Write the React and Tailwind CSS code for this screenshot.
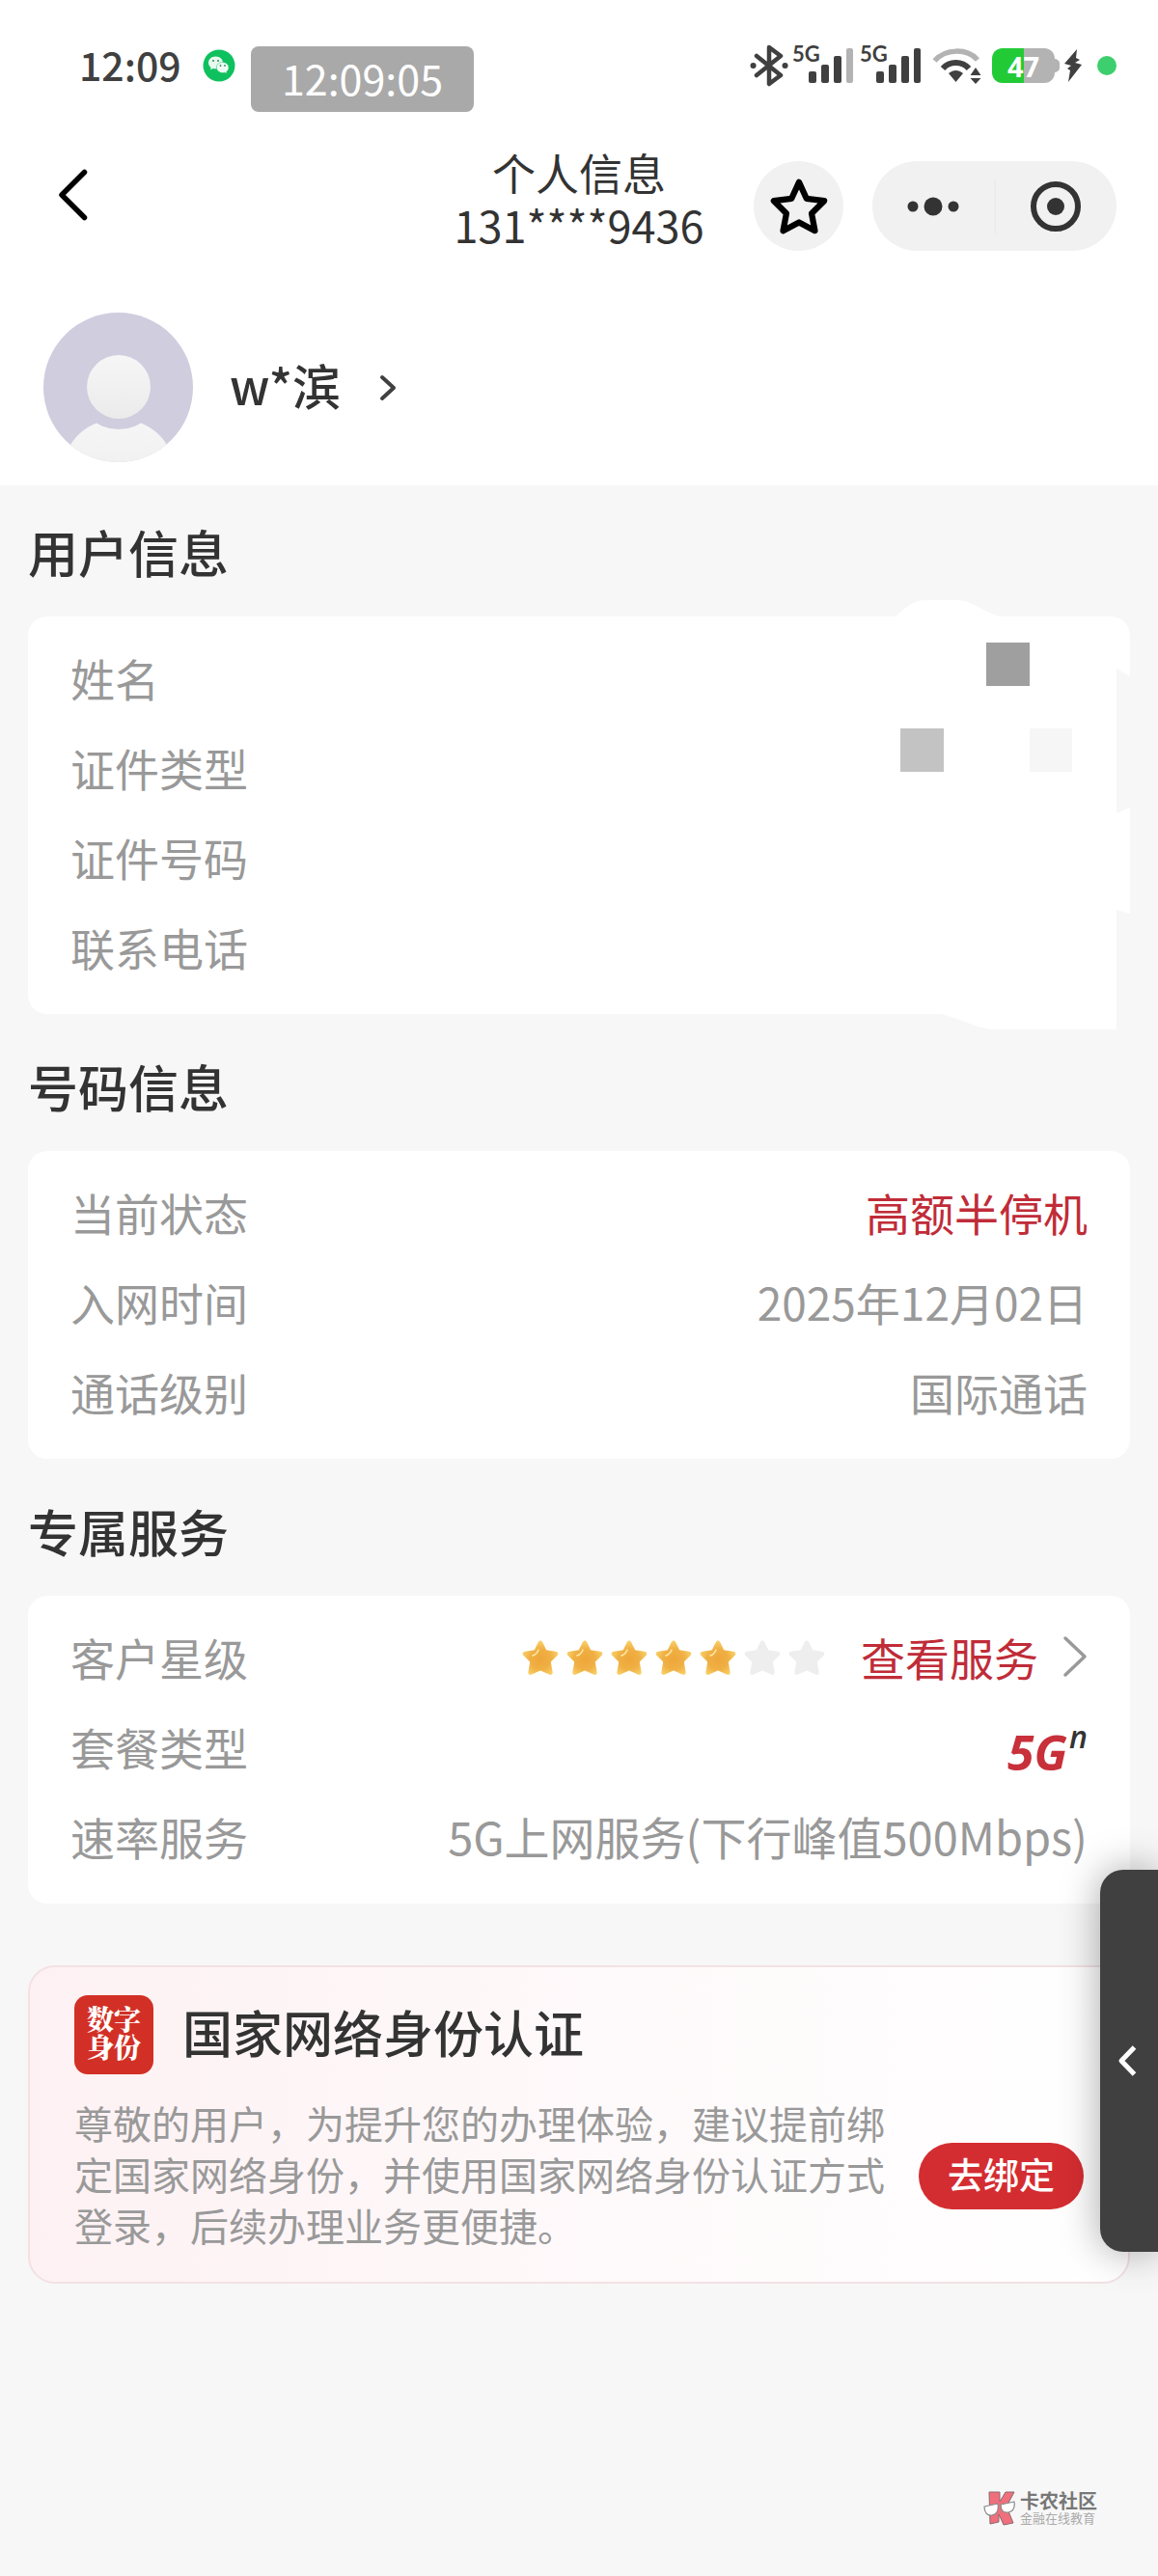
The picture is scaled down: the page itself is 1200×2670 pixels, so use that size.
import React from "react";

const STAR =
  "M20 1.5c1 0 1.7.6 2.2 1.6l4 8.2 9.6 1.4c2.6.4 3.4 2.6 1.6 4.4l-6.6 6.5 1.8 10.4c.4 2.4-1.4 3.6-3.6 2.5L20 32.4l-9 4.1c-2.2 1.1-4-.1-3.6-2.5l1.8-10.4-6.6-6.5c-1.8-1.8-1-4 1.6-4.4l9.6-1.4 4-8.2c.5-1 1.2-1.6 2.2-1.6z";

function WeChatIcon() {
  return (
    <svg className="h-[34px] w-[34px]" viewBox="0 0 34 34" aria-hidden="true">
      <circle cx="17" cy="17" r="16.5" fill="#0fc15e" />
      <path d="M13.5 7.5c-4.2 0-7.5 2.900-7.5 6.500 0 2 1 3.700 2.600 4.900l-.6 2.300 2.700-1.300c.9.300 1.800.4 2.800.4 4.200 0 7.500-2.700 7.500-6.300s-3.300-6.500-7.500-6.500z" fill="#e8f9ef" />
      <path d="M20.7 13.5c-3.500 0-6.300 2.400-6.300 5.500s2.800 5.500 6.300 5.500c.8 0 1.500-.1 2.200-.3l2.300 1.100-.5-1.900c1.400-1 2.300-2.600 2.300-4.400 0-3.100-2.800-5.500-6.300-5.500z" fill="#f1fcf5" stroke="#0fc15e" strokeWidth=".5" />
      <g fill="#2b8c5a">
        <circle cx="11" cy="12" r="1" />
        <circle cx="16" cy="12" r="1" />
        <circle cx="18.5" cy="17" r=".9" />
        <circle cx="23" cy="17" r=".9" />
      </g>
    </svg>
  );
}

function Signal({ weak }) {
  return (
    <div className="flex h-[42px] w-[63px] items-start">
      <span className="font-['Lato','Noto_Sans_CJK_SC',sans-serif] text-[22px] leading-[18px] font-bold">5G</span>
      <svg className="-ml-3 h-[42px] w-[48px] shrink-0" viewBox="0 0 48 42" aria-hidden="true">
        <rect x="0" y="27" width="8" height="12" rx="2" fill="#404040" />
        <rect x="13" y="20" width="8" height="19" rx="2" fill="#404040" />
        <rect x="26" y="11" width="8" height="28" rx="2" fill="#404040" />
        <rect x="39" y="3" width="7" height="36" rx="2" fill={weak ? "#b3b3b3" : "#404040"} />
      </svg>
    </div>
  );
}

function StatusBar() {
  return (
    <div className="relative flex h-[136px] items-center pr-[43px] pl-[82px] text-[#404040]">
      <span className="pb-1 text-[41px] leading-none font-medium">12:09</span>
      <span className="ml-[22px]">
        <WeChatIcon />
      </span>
      <div className="absolute top-12 left-[260px] flex h-[68px] w-[231px] items-center justify-center rounded-lg bg-[#a9a9a9] pb-1 text-[43px] leading-none text-white">
        12:09:05
      </div>
      <div className="ml-auto flex items-center">
        <svg className="h-[44px] w-[40px]" viewBox="0 0 40 44" fill="none" stroke="#404040" strokeWidth="4.5" strokeLinecap="round" strokeLinejoin="round" aria-hidden="true">
          <path d="M7 12l25 20-12 9V3l12 9L7 32" />
          <path d="M3.500 22h.1M36.500 22h.1" strokeWidth="6" />
        </svg>
        <div className="ml-1 flex gap-[7px]">
          <Signal weak />
          <Signal />
        </div>
        <svg className="ml-3 h-[38px] w-[52px]" viewBox="0 0 52 38" fill="none" aria-hidden="true">
          <path d="M2.500 14C14 1 36 1 47 13" stroke="#b3b3b3" strokeWidth="5.5" />
          <path d="M11 22c7-8 20-8 27 0" stroke="#404040" strokeWidth="6" />
          <path d="M17 27c5-4 10-4 15 0l-7.500 9z" fill="#404040" />
          <path d="M45 21l5.500 8h-11zM45 38l5.500-6h-11z" fill="#404040" />
        </svg>
        <div className="relative ml-2.5 flex items-center">
          <svg className="h-9 w-[70px]" viewBox="0 0 70 36" aria-hidden="true">
            <path d="M33 0h21c7 0 11 5 11 11h1q4 2 4 4v6q0 2-4 4h-1c0 6-4 11-11 11H33z" fill="#b3b3b3" />
            <path d="M33 0H11C4 0 0 5 0 11v14c0 6 4 11 11 11h22z" fill="#22cb36" />
          </svg>
          <span className="absolute inset-y-0 left-0 flex w-[65px] items-center justify-center font-['Open_Sans','Noto_Sans_CJK_SC',sans-serif] text-[29px] leading-none font-bold text-white">47</span>
        </div>
        <svg className="ml-1 h-9 w-[20px]" viewBox="0 0 20 36" fill="#404040" aria-hidden="true">
          <path d="M14 1L1 16l7 2-4 3 3 2-2 12 14-18-7-2 5-3-4-2z" />
        </svg>
        <span className="ml-[15px] h-5 w-5 rounded-full bg-[#3dcf6e]" />
      </div>
    </div>
  );
}

function Header() {
  return (
    <header className="grid grid-cols-[1fr_auto_1fr] items-center px-[43px] pt-4 pb-[3px]">
      <button type="button" aria-label="返回" className="ml-3 w-10 pb-2">
        <svg className="h-[60px] w-10" viewBox="0 0 40 60" fill="none" stroke="#000" strokeWidth="5.5" strokeLinecap="round" strokeLinejoin="round" aria-hidden="true">
          <path d="M32.500 6.500L9 30l23.500 23.500" />
        </svg>
      </button>
      <h1 className="text-center text-[45px] leading-[54px] text-[#333]">
        个人信息
        <br />
        131****9436
      </h1>
      <div className="flex justify-end gap-[30px] pt-[15px]">
        <button type="button" aria-label="收藏" className="flex h-[93px] w-[93px] items-center justify-center rounded-full bg-[#f1f1f1]">
          <svg className="h-[60px] w-[60px]" viewBox="0 0 62 62" fill="none" stroke="#000" strokeWidth="6.5" strokeLinejoin="round" aria-hidden="true">
            <path d="M31 5l8 17.500 19 2.500-13.500 13.500L48 57 31 48 14 57l3.500-18.500L4 25l19-2.500z" />
          </svg>
        </button>
        <div className="flex h-[93px] w-[253px] items-center rounded-full bg-[#f1f1f1]">
          <button type="button" aria-label="更多" className="flex h-full flex-1 items-center justify-center">
            <svg className="h-5 w-[54px]" viewBox="0 0 54 20" fill="#333" aria-hidden="true">
              <circle cx="6" cy="10" r="5.5" />
              <circle cx="27" cy="10" r="9.5" />
              <circle cx="48" cy="10" r="5.5" />
            </svg>
          </button>
          <span className="h-14 w-0.5 bg-[#ececec]" />
          <button type="button" aria-label="关闭" className="flex h-full flex-1 items-center justify-center">
            <svg className="h-[54px] w-[54px]" viewBox="0 0 54 54" aria-hidden="true">
              <circle cx="27" cy="27" r="23" fill="none" stroke="#333" strokeWidth="6" />
              <circle cx="27" cy="27" r="9" fill="#333" />
            </svg>
          </button>
        </div>
      </div>
    </header>
  );
}

function Profile() {
  return (
    <section className="flex items-center px-11 pt-[60px] pb-[23px]">
      <svg className="h-[157px] w-[157px]" viewBox="0 0 157 157" aria-hidden="true">
        <defs>
          <clipPath id="avatarClip">
            <circle cx="78.5" cy="78.5" r="77.5" />
          </clipPath>
          <linearGradient id="avatarFill" x1="0" y1="0" x2="0" y2="1">
            <stop offset="0" stopColor="#f6f6f6" />
            <stop offset="1" stopColor="#ebebeb" />
          </linearGradient>
        </defs>
        <g clipPath="url(#avatarClip)">
          <rect width="157" height="157" fill="#cfcdde" />
          <ellipse cx="79" cy="163" rx="57" ry="52" fill="url(#avatarFill)" />
          <circle cx="79" cy="78" r="44" fill="#cfcdde" />
          <circle cx="79" cy="78" r="33" fill="url(#avatarFill)" />
        </g>
      </svg>
      <button type="button" className="ml-[37px] flex items-center text-[50px] leading-[60px] font-medium text-[#333]">
        <span className="pb-2">w*滨</span>
        <svg className="ml-9 h-[34px] w-[26px]" viewBox="0 0 26 34" fill="none" stroke="#404040" strokeWidth="4" strokeLinecap="round" strokeLinejoin="round" aria-hidden="true">
          <path d="M7 6l12 11L7 28" />
        </svg>
      </button>
    </section>
  );
}

function Section({ title, children }) {
  return (
    <section className="mt-[45px] first:mt-0">
      <h2 className="text-[52px] leading-[60px] font-medium text-[#333]">{title}</h2>
      <div className="relative mt-[37px] rounded-[20px] bg-white px-11 py-5">{children}</div>
    </section>
  );
}

function Row({ label, children }) {
  return (
    <div className="flex h-[93px] items-center justify-between pb-[7px] text-[46px] leading-[60px] text-[#999]">
      <dt>{label}</dt>
      <dd className="flex items-center">{children}</dd>
    </div>
  );
}

function Redaction() {
  return (
    <svg className="absolute -top-[17px] right-0 h-[446px] w-[271px]" viewBox="0 0 271 446" aria-hidden="true">
      <path d="M257 71l14 8v136l-14 6z" fill="#f7f7f7" />
      <path d="M257 321l14 4v121h-14z" fill="#f7f7f7" />
      <path d="M28 17C37 10 44 0 60 0h32c14 0 24 10 43 17zM68 428c24 2 40 17 65 17h124V400z" fill="#fff" />
      <rect x="122" y="44" width="45" height="45" fill="#9f9f9f" />
      <rect x="33" y="133" width="45" height="45" fill="#c3c3c3" />
      <rect x="167" y="133" width="44" height="45" fill="#f6f6f6" />
    </svg>
  );
}

function Rating({ value, total }) {
  return (
    <span className="flex gap-1.5 pt-1" role="img" aria-label={`${value} / ${total}`}>
      <svg className="absolute h-0 w-0" aria-hidden="true">
        <defs>
          <radialGradient id="gold" cx=".5" cy=".55" r=".6">
            <stop offset="0" stopColor="#eea63a" />
            <stop offset=".5" stopColor="#f0b044" />
            <stop offset="1" stopColor="#fadb75" />
          </radialGradient>
        </defs>
      </svg>
      {Array.from({ length: total }, (_, i) => (
        <svg key={i} className="h-10 w-10" viewBox="0 0 40 40" aria-hidden="true">
          <path d={STAR} fill={i < value ? "url(#gold)" : "#eeeeee"} />
          {i < value && <path d="M12 17q4-1 6-6" fill="none" stroke="#fdeaa8" strokeWidth="1.5" strokeLinecap="round" />}
        </svg>
      ))}
    </span>
  );
}

function AuthCard() {
  return (
    <section className="mt-16 rounded-[28px] border-2 border-[#f3e1e4] bg-linear-to-r from-[#fdf1f3] via-[#fef9fa] to-white px-[46px] pt-[29px] pb-8">
      <div className="flex items-center">
        <div className="flex h-[82px] w-[82px] flex-col items-center justify-center rounded-[14px] bg-[#d23026] pb-1 font-['Noto_Serif_CJK_SC','Noto_Sans_CJK_SC',serif] text-[28px] leading-[29px] font-black text-white">
          <span>数字</span>
          <span>身份</span>
        </div>
        <h2 className="ml-[30px] pb-1.5 text-[52px] leading-[60px] font-medium text-[#333]">国家网络身份认证</h2>
      </div>
      <div className="mt-6 flex items-center gap-8">
        <p className="flex-1 text-[40px] leading-[53px] text-[#999]">
          尊敬的用户，为提升您的办理体验，建议提前绑定国家网络身份，并使用国家网络身份认证方式登录，后续办理业务更便捷。
        </p>
        <div className="shrink-0 pt-1">
          <button type="button" className="h-[69px] w-[171px] rounded-full bg-[#d42d31] pb-1 text-[37px] leading-none font-medium text-white">
            去绑定
          </button>
        </div>
      </div>
    </section>
  );
}

function Watermark() {
  return (
    <footer className="mt-auto flex items-center justify-end gap-1 pr-[34px] pb-[52px]">
      <svg className="h-9 w-[34px]" viewBox="0 0 34 36" aria-hidden="true">
        <path d="M6 1h11v10l6-10h9l-8 15 7 17-10 2-5-11v8l-9 2z" fill="#f06f7c" stroke="#8a6a6e" strokeWidth="1" />
        <path d="M1 16l14-3c1 6-1 11-6 12s-8-3-8-9zM18 14l14-3c1 6-1 10-6 11s-8-2-8-8z" fill="#fff" stroke="#888" strokeWidth="1.2" strokeLinejoin="round" />
      </svg>
      <div>
        <div className="text-[20px] leading-5 font-bold text-[#777]">卡农社区</div>
        <div className="text-[13px] leading-4 text-[#aaa]">金融在线教育</div>
      </div>
    </footer>
  );
}

export default function App() {
  return (
    <div className="relative flex min-h-screen flex-col overflow-hidden bg-white font-['Noto_Sans_CJK_SC',sans-serif]">
      <StatusBar />
      <Header />
      <Profile />
      <main className="flex flex-1 flex-col bg-[#f7f7f7] px-[29px] pt-[39px]">
        <div>
          <Section title="用户信息">
            <dl>
              <Row label="姓名" />
              <Row label="证件类型" />
              <Row label="证件号码" />
              <Row label="联系电话" />
            </dl>
            <Redaction />
          </Section>
          <Section title="号码信息">
            <dl>
              <Row label="当前状态">
                <span className="text-[#c02c38]">高额半停机</span>
              </Row>
              <Row label="入网时间">2025年12月02日</Row>
              <Row label="通话级别">国际通话</Row>
            </dl>
          </Section>
          <Section title="专属服务">
            <dl>
              <Row label="客户星级">
                <Rating value={5} total={7} />
                <a href="#services" className="ml-9 flex items-center text-[#c02c38]">
                  查看服务
                  <svg className="ml-6 h-[46px] w-[27px]" viewBox="0 0 27 46" fill="none" stroke="#999" strokeWidth="3.5" strokeLinecap="round" strokeLinejoin="round" aria-hidden="true">
                    <path d="M4 4l20 19L4 42" />
                  </svg>
                </a>
              </Row>
              <Row label="套餐类型">
                <span className="flex items-start pt-3 font-['Open_Sans','Noto_Sans_CJK_SC',sans-serif] italic">
                  <span className="text-[50px] leading-[60px] font-bold text-[#c8303a]">5G</span>
                  <span className="ml-0.5 text-[32px] leading-[28px] font-semibold text-[#333]">n</span>
                </span>
              </Row>
              <Row label="速率服务">
                <span className="text-[47px]">5G上网服务(下行峰值500Mbps)</span>
              </Row>
            </dl>
          </Section>
        </div>
        <AuthCard />
        <Watermark />
      </main>
      <button
        type="button"
        aria-label="展开侧栏"
        className="absolute top-[1938px] right-0 flex h-[396px] w-[60px] items-center rounded-l-[24px] bg-[#404040] pl-4 shadow-[0_0_40px_rgba(0,0,0,0.35)]"
      >
        <svg className="h-9 w-6" viewBox="0 0 24 36" fill="none" stroke="#fff" strokeWidth="5" strokeLinejoin="round" aria-hidden="true">
          <path d="M19.500 4L6 18l13.500 14" />
        </svg>
      </button>
    </div>
  );
}
